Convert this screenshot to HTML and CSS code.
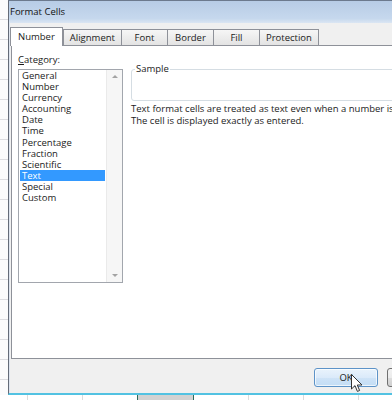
FILE: index.html
```html
<!DOCTYPE html>
<html lang="en">
<head>
    <meta charset="UTF-8">
    <meta name="viewport" content="width=device-width, initial-scale=1.0">
    <title>Format Cells</title>
    <link rel="stylesheet" href="styles.css">
</head>
<body>

    <div class="desk">
        <!-- bit of the worksheet left of the dialog -->
        <div class="sheet-edge"></div>

        <div class="dialog">
            <div class="titlebar">Format Cells</div>

            <div class="dialog-body">
                <div class="tabs">
                    <div class="tab active">Number</div>
                    <div class="tab">Alignment</div>
                    <div class="tab">Font</div>
                    <div class="tab">Border</div>
                    <div class="tab">Fill</div>
                    <div class="tab">Protection</div>
                </div>

                <div class="panel">
                    <div class="col-left">
                        <div class="label"><u>C</u>ategory:</div>
                        <div class="listbox">
                            <ul class="items">
                                <li>General</li>
                                <li>Number</li>
                                <li>Currency</li>
                                <li>Accounting</li>
                                <li>Date</li>
                                <li>Time</li>
                                <li>Percentage</li>
                                <li>Fraction</li>
                                <li>Scientific</li>
                                <li class="selected">Text</li>
                                <li>Special</li>
                                <li>Custom</li>
                            </ul>
                            <div class="scrollbar">
                                <span class="arrow up"></span>
                                <span class="arrow down"></span>
                            </div>
                        </div>
                    </div>

                    <div class="col-right">
                        <fieldset class="sample">
                            <legend>Sample</legend>
                            <div class="sample-value"></div>
                        </fieldset>
                        <p class="desc">Text format cells are treated as text even when a number is in the cell.<br>The cell is displayed exactly as entered.</p>
                    </div>
                </div>

                <div class="footer">
                    <button class="btn default">OK</button>
                    <button class="btn">Cancel</button>
                </div>
            </div>
        </div>
    </div>

    <!-- worksheet below the dialog -->
    <div class="sheet-bottom">
        <div class="cell first"></div>
        <div class="cell"></div>
        <div class="cell"></div>
        <div class="cell sel"></div>
        <div class="cell"></div>
        <div class="cell"></div>
        <div class="cell"></div>
    </div>

    <svg class="cursor" width="12" height="19" viewBox="0 0 12 19">
        <path d="M0.5 0.5 L0.5 15 L4 11.6 L6.4 17.4 L8.6 16.5 L6.3 11 L11 11 Z" fill="#fff" stroke="#333" stroke-width="1" stroke-linejoin="round"/>
    </svg>

</body>
</html>
```

FILE: styles.css
```css
body {
    margin: 0;
    width: 392px;
    height: 400px;
    overflow: hidden;
    position: relative;
    font-family: "Open Sans", "Noto Sans", sans-serif;
    font-size: 9.5px;
    color: #1b1b1b;
    background-color: #fff;
}
.desk {
    display: flex;
    height: 395px;
}
.sheet-edge {
    flex: none;
    width: 8px;
    background: repeating-linear-gradient(to bottom, #fbfbfc 0, #fbfbfc 19px, #dcdce0 19px, #dcdce0 20px);
}
.dialog {
    flex: none;
    width: 452px;
    display: flex;
    flex-direction: column;
    border-left: 1px solid #646b78;
    border-top: 1px solid #6c7a8e;
    border-bottom: 2px solid #52c2e2;
    box-sizing: border-box;
}
.titlebar {
    height: 22px;
    line-height: 22px;
    padding-left: 1px;
    background: linear-gradient(to bottom, #b7cce6, #c6d8ed 80%, #dbe6f3);
    color: #111;
    white-space: nowrap;
}
.dialog-body {
    flex: 1;
    display: flex;
    flex-direction: column;
    background-color: #f0f0f0;
    border-left: 1px solid #dde4ef;
    padding: 4px 0 0 1px;
}
.tabs {
    display: flex;
    align-items: flex-end;
    height: 18px;
    margin-left: -1px;
}
.tab {
    box-sizing: border-box;
    height: 16px;
    line-height: 15px;
    min-width: 47px;
    padding: 0 6px;
    text-align: center;
    border: 1px solid #8e9199;
    border-bottom: none;
    margin-left: -1px;
    background: linear-gradient(to bottom, #f6f6f6, #e3e3e3);
    white-space: nowrap;
}
.tab.active {
    height: 19px;
    line-height: 17px;
    margin-left: 0;
    margin-right: 1px;
    margin-bottom: -1px;
    padding: 0 7px;
    background: #fff;
    position: relative;
    z-index: 1;
}
.panel {
    box-sizing: border-box;
    height: 314px;
    display: flex;
    background-color: #fff;
    border: 1px solid #8e9199;
    padding: 8px 0 0 6px;
}
.col-left {
    flex: none;
    width: 105px;
}
.label {
    height: 12px;
    line-height: 12px;
}
.listbox {
    box-sizing: border-box;
    margin-top: 3px;
    height: 214px;
    display: flex;
    border: 1px solid #a2a6ad;
}
.items {
    flex: 1;
    list-style: none;
    margin: 0;
    padding: 0 1px;
}
.items li {
    height: 11.1px;
    line-height: 11.1px;
    padding-left: 2px;
}
.items li.selected {
    background-color: #3399ff;
    color: #fff;
}
.scrollbar {
    flex: none;
    width: 15px;
    display: flex;
    flex-direction: column;
    justify-content: space-between;
    align-items: center;
    padding: 5px 0;
    background-color: #f6f6f6;
    border-left: 1px solid #eaeaea;
}
.arrow {
    width: 0;
    height: 0;
    border-left: 3px solid transparent;
    border-right: 3px solid transparent;
}
.arrow.up {
    border-bottom: 3px solid #a3a3a3;
}
.arrow.down {
    border-top: 3px solid #a3a3a3;
}
.col-right {
    flex: 1;
    margin-left: 8px;
}
.sample {
    margin: 9px 8px 0 0;
    padding: 0;
    border: 1px solid #d5dde3;
    border-radius: 3px;
}
.sample legend {
    margin-left: 3px;
    padding: 0 1px;
    line-height: 12px;
}
.sample-value {
    height: 25px;
}
.desc {
    margin: 2px 0 0;
    line-height: 12px;
    white-space: nowrap;
}
.footer {
    flex: 1;
    display: flex;
    justify-content: flex-end;
    align-items: flex-start;
    gap: 9px;
    padding: 9px 9px 0 0;
}
.btn {
    box-sizing: border-box;
    width: 64px;
    height: 19px;
    padding: 0;
    font-family: inherit;
    font-size: 9.5px;
    color: #1b1b1b;
    border: 1px solid #707070;
    border-radius: 3px;
    background: linear-gradient(to bottom, #f2f2f2, #ebebeb 50%, #dddddd 50%, #cfcfcf);
}
.btn.default {
    border-color: #5d93c8;
    background: linear-gradient(to bottom, #e9f3fc, #dbeafa 50%, #cfe3f7 50%, #c3ddf5);
    box-shadow: inset 0 0 0 1px rgba(255, 255, 255, 0.7);
}
.sheet-bottom {
    display: flex;
    height: 5px;
    background-color: #fff;
}
.cell {
    flex: none;
    width: 54px;
    border-right: 1px solid #dcdcdc;
}
.cell.first {
    width: 27px;
}
.cell.sel {
    width: 55px;
    background-color: #d2d2d2;
    border-left: 1px solid #2d6b5c;
    border-right: 1px solid #2d6b5c;
    margin-left: -1px;
}
.cursor {
    position: absolute;
    left: 351px;
    top: 374px;
}
```
